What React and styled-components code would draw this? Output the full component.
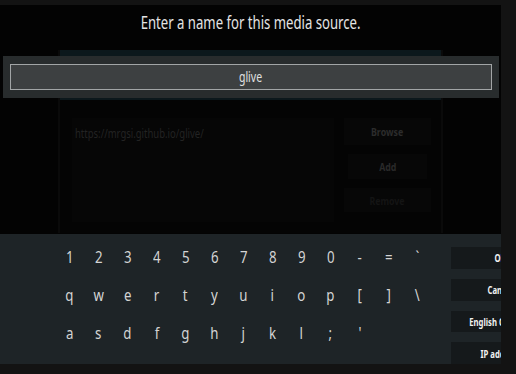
import React from "react";
import styled, { createGlobalStyle } from "styled-components";

const GlobalStyle = createGlobalStyle`
  html, body {
    margin: 0;
    padding: 0;
    background: #131313;
    font-family: "Noto Sans", "Open Sans", sans-serif;
  }
`;

const Stage = styled.div`
  width: 516px;
  height: 374px;
  padding-top: 5px;
  box-sizing: border-box;
  background: #131313;
`;

const Screen = styled.div`
  position: relative;
  width: 501px;
  height: 359px;
  overflow: hidden;
  background: #030303;
`;

// the source dialog dimmed behind the keyboard
const BackDialog = styled.div`
  margin: 45px 0 0 58px;
  width: 385px;
  height: 183px;
  display: flex;
  flex-direction: column;
  background: #040404;
  border-left: 2px solid #0a0a0a;
  border-right: 2px solid #0a0a0a;
  box-sizing: border-box;
`;

const BackHeader = styled.div`
  height: 50px;
  background: #0c181c;
`;

const BackBody = styled.div`
  display: flex;
  gap: 10px;
  padding: 18px 10px 0 12px;
`;

const UrlField = styled.div`
  width: 263px;
  height: 104px;
  padding: 8px 3px;
  box-sizing: border-box;
  background: #060606;
  color: #232323;
  font-size: 13px;
  line-height: 14px;
`;

const BackButtons = styled.div`
  display: flex;
  flex-direction: column;
  align-items: center;
  gap: 9px;
  width: 87px;
`;

const BackButton = styled.div`
  width: ${(p) => p.$w}px;
  height: ${(p) => p.$h}px;
  display: flex;
  align-items: center;
  justify-content: center;
  background: #070707;
  color: ${(p) => p.$c};
  font-size: 11px;
  font-weight: 700;
`;

const Squeeze = styled.span`
  display: inline-block;
  white-space: nowrap;
  transform: scaleX(${(p) => p.$k});
  transform-origin: ${(p) => p.$o || "center"};
`;

const Overlay = styled.div`
  position: absolute;
  inset: 0;
  display: flex;
  flex-direction: column;
`;

const TitleBar = styled.div`
  height: 54px;
  padding-top: 5px;
  box-sizing: border-box;
  text-align: center;
  color: #e4e4e4;
  font-size: 18px;
  line-height: 24px;
`;

const InputBand = styled.div`
  margin: 0 2px 0 3px;
  padding: 8px 7px;
  background: #282c2d;
`;

const InputBox = styled.div`
  height: 26px;
  box-sizing: border-box;
  border: 1px solid #a2a5a6;
  background: #3d4041;
  color: #e0e0e0;
  font-size: 15px;
  line-height: 23px;
  text-align: center;
`;

const Keyboard = styled.div`
  margin-top: 136px;
  height: 127px;
  display: flex;
  gap: 19px;
  padding: 3px 0 0 55px;
  background: #1e2427;
`;

const KeyGrid = styled.div`
  display: grid;
  grid-template-columns: repeat(13, 29px);
  grid-auto-rows: 38px;
  flex-shrink: 0;
`;

const Key = styled.div`
  display: flex;
  align-items: center;
  justify-content: center;
  color: #d4d4d4;
  font-size: 17px;
`;

const SideButtons = styled.div`
  display: flex;
  flex-direction: column;
  gap: 10px;
  padding-top: 10px;
  flex-shrink: 0;
`;

const SideButton = styled.div`
  width: 98px;
  height: 24px;
  display: flex;
  align-items: center;
  justify-content: center;
  background: #15191b;
  color: #f2f2f2;
  font-size: 11px;
  font-weight: 700;
`;

const rows = [
  ["1", "2", "3", "4", "5", "6", "7", "8", "9", "0", "-", "=", "`"],
  ["q", "w", "e", "r", "t", "y", "u", "i", "o", "p", "[", "]", "\\"],
  ["a", "s", "d", "f", "g", "h", "j", "k", "l", ";", "'"],
];

const sideLabels = ["OK", "Cancel", "English QWERTY", "IP address"];

const App = () => {
  return (
    <Stage>
      <GlobalStyle />
      <Screen>
        <BackDialog>
          <BackHeader />
          <BackBody>
            <UrlField>
              <Squeeze $k={0.73} $o="left">https://mrgsi.github.io/glive/</Squeeze>
            </UrlField>
            <BackButtons>
              <BackButton $w={87} $h={27} $c="#2c2c2c">
                <Squeeze $k={0.8}>Browse</Squeeze>
              </BackButton>
              <BackButton $w={79} $h={25} $c="#2a2a2a">
                <Squeeze $k={0.8}>Add</Squeeze>
              </BackButton>
              <BackButton $w={87} $h={24} $c="#141414">
                <Squeeze $k={0.8}>Remove</Squeeze>
              </BackButton>
            </BackButtons>
          </BackBody>
        </BackDialog>

        <Overlay>
          <TitleBar>
            <Squeeze $k={0.73}>Enter a name for this media source.</Squeeze>
          </TitleBar>
          <InputBand>
            <InputBox>
              <Squeeze $k={0.7}>glive</Squeeze>
            </InputBox>
          </InputBand>
          <Keyboard>
            <KeyGrid>
              {rows.map((row, r) =>
                row.map((k, i) => (
                  <Key key={`${r}-${i}`}>
                    <Squeeze $k={0.78}>{k}</Squeeze>
                  </Key>
                ))
              )}
            </KeyGrid>
            <SideButtons>
              {sideLabels.map((l) => (
                <SideButton key={l}>
                  <Squeeze $k={0.7}>{l}</Squeeze>
                </SideButton>
              ))}
            </SideButtons>
          </Keyboard>
        </Overlay>
      </Screen>
    </Stage>
  );
};

export default App;
